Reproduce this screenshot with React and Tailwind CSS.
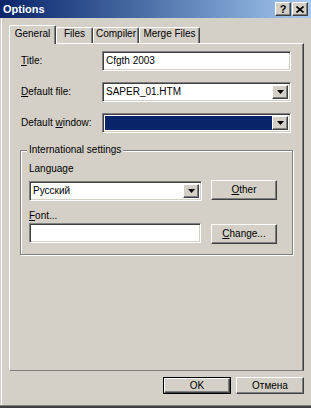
import React from 'react';

const font = "font-['Liberation_Sans',Arial,sans-serif]";

// Win2000 style 3D edges
const raised =
    'bg-[#d4d0c8] border-t border-l border-t-white border-l-white border-b border-r border-b-[#404040] border-r-[#404040] shadow-[inset_-1px_-1px_0_#808080]';
const sunken =
    'bg-white border-t border-l border-t-[#808080] border-l-[#808080] border-b border-r border-b-white border-r-white shadow-[inset_1px_1px_0_#404040,inset_-1px_-1px_0_#d4d0c8]';

function Arrow() {
    return (
        <svg width="7" height="4" viewBox="0 0 7 4">
            <polygon points="0,0 7,0 3.5,4" fill="#000" />
        </svg>
    );
}

function DropButton() {
    return (
        <div className={`${raised} w-[16px] h-full flex items-center justify-center flex-shrink-0`}>
            <Arrow />
        </div>
    );
}

function TextField({ value, width }) {
    return (
        <div className={`${sunken} h-[20px] flex items-center pl-[3px] text-[10px] leading-[12px]`} style={{ width }}>
            {value}
        </div>
    );
}

function Combo({ value, width, selected }) {
    return (
        <div className={`${sunken} h-[20px] flex p-[2px]`} style={{ width }}>
            <div className={`flex-1 flex items-center pl-[1px] text-[10px] leading-[12px] ${selected ? 'bg-[#0a246a]' : ''}`}>
                {value}
            </div>
            <DropButton />
        </div>
    );
}

function Button({ children, className = '' }) {
    return (
        <div className={`${raised} flex items-center justify-center text-[10px] leading-[12px] ${className}`}>
            {children}
        </div>
    );
}

function Tab({ label, width, active }) {
    return (
        <div
            className={`flex justify-center border-t border-l border-white border-r border-r-[#404040] rounded-t-[2px] shadow-[inset_-1px_0_0_#808080] bg-[#d4d0c8] ${
                active ? 'h-[19px] pt-[2px] -mb-[1px] relative z-10' : 'h-[16px]'
            }`}
            style={{ width }}
        >
            <span className="text-[10px] leading-[12px]">{label}</span>
        </div>
    );
}

function Row({ label, children, className = '' }) {
    return (
        <div className={`flex items-center pl-[11px] h-[20px] ${className}`}>
            <div className="w-[81px] text-[10px] leading-[12px]">{label}</div>
            {children}
        </div>
    );
}

export default function App() {
    return (
        <div className={`w-[311px] h-[408px] bg-[#d4d0c8] flex flex-col overflow-hidden text-black ${font}`}>

            {/* ── Title bar ── */}
            <div className="h-[18px] flex-shrink-0 flex items-center bg-linear-to-r from-[#0a246a] to-[#a6caf0] pl-[3px] pr-[3px]">
                <span className="text-white font-bold text-[11px] leading-[13px] flex-1">Options</span>
                <div className={`${raised} w-[16px] h-[14px] flex items-center justify-center text-[11px] font-bold leading-[11px] mr-[1px]`}>
                    ?
                </div>
                <div className={`${raised} w-[16px] h-[14px] flex items-center justify-center`}>
                    <svg width="8" height="7" viewBox="0 0 8 7">
                        <path d="M0.5 0.5 L7.5 6.5 M7.5 0.5 L0.5 6.5" stroke="#000" strokeWidth="1.6" />
                    </svg>
                </div>
            </div>

            {/* ── Body ── */}
            <div className="flex-1 flex flex-col ml-[1px] border-l border-white pt-[7px] pl-[7px]">
                {/* Tabs */}
                <div className="flex items-end h-[18px]">
                    <Tab label="General" width={47} active />
                    <Tab label="Files" width={37} />
                    <Tab label="Compiler" width={46} />
                    <Tab label="Merge Files" width={61} />
                </div>

                {/* Tab page */}
                <div className="w-[295px] h-[328px] border-t border-l border-white border-r border-b border-r-[#404040] border-b-[#808080] shadow-[inset_-1px_0_0_#808080] pt-[7px] flex flex-col">
                    <Row label={<><u>T</u>itle:</>}>
                        <TextField value="Cfgth 2003" width={189} />
                    </Row>
                    <Row label={<><u>D</u>efault file:</>} className="mt-[11px]">
                        <Combo value="SAPER_01.HTM" width={189} />
                    </Row>
                    <Row label={<>Default <u>w</u>indow:</>} className="mt-[11px]">
                        <Combo value="" width={189} selected />
                    </Row>

                    {/* Group box */}
                    <div className="relative ml-[10px] mt-[17px] w-[273px] border border-[#808080] shadow-[inset_1px_1px_0_white,1px_1px_0_white] pt-[12px] pl-[8px] pb-[10px]">
                        <span className="absolute -top-[7px] left-[6px] px-[2px] bg-[#d4d0c8] text-[10px] leading-[12px]">
                            International settings
                        </span>
                        <div className="text-[10px] leading-[12px]">Language</div>
                        <div className="flex mt-[6px] gap-[9px]">
                            <Combo value="Русский" width={173} />
                            <Button className="w-[66px] h-[20px] -mt-[1px]"><span><u>O</u>ther</span></Button>
                        </div>
                        <div className="text-[10px] leading-[12px] mt-[9px]"><u>F</u>ont...</div>
                        <div className="flex mt-[1px] gap-[10px]">
                            <TextField value="" width={172} />
                            <Button className="w-[66px] h-[20px] mt-[1px]"><span><u>C</u>hange...</span></Button>
                        </div>
                    </div>
                </div>

                {/* Dialog buttons */}
                <div className="flex justify-end w-[295px] mt-[6px] gap-[5px]">
                    <div className="border border-black">
                        <Button className="w-[66px] h-[15px]">OK</Button>
                    </div>
                    <Button className="w-[68px] h-[17px]">Отмена</Button>
                </div>
            </div>

            {/* Window frame bottom */}
            <div className="h-[3px] flex-shrink-0 border-t border-[#808080] bg-[#404040]" />
        </div>
    );
}
